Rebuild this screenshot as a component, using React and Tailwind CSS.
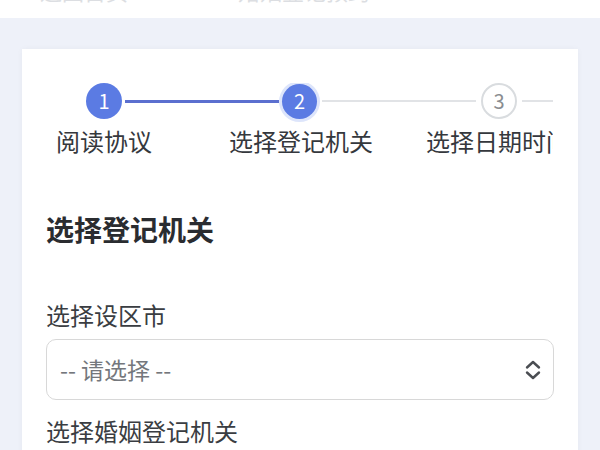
import React from "react";

const font = { fontFamily: '"Noto Sans CJK SC", "Noto Sans", sans-serif' };

function Circle({ n, state }) {
  if (state === "done") {
    return (
      <div className="w-[36px] h-[36px] rounded-full bg-[#5b7be3] text-white flex items-center justify-center text-[20px] shrink-0">
        {n}
      </div>
    );
  }
  if (state === "active") {
    return (
      <div className="w-[35px] h-[35px] rounded-full bg-[#5b7be3] text-white flex items-center justify-center text-[20px] shrink-0 ring-[3px] ring-[#dde5fb]">
        {n}
      </div>
    );
  }
  return (
    <div className="w-[36px] h-[36px] rounded-full bg-white border-2 border-[#d9dcdf] text-[#8a8d91] flex items-center justify-center text-[20px] shrink-0">
      {n}
    </div>
  );
}

export default function App() {
  return (
    <div className="w-[600px] h-[450px] overflow-hidden bg-[#eef1f9]" style={font}>
      <div className="h-[18px] bg-white overflow-hidden">
        <div className="-mt-[22px] flex gap-[110px] pl-[40px] text-[22px] leading-[24px] text-[#dcdee2]">
          <span>返回首页</span>
          <span>婚姻登记预约</span>
        </div>
      </div>
      <div className="mx-[22px] mt-[31px] bg-white shadow-[0_0_6px_rgba(0,0,0,0.04)] px-[24px] pt-[82px] pb-[40px] h-[420px]">
        <div className="-mt-[48px] w-[507px] overflow-hidden">
          <div className="flex items-center pl-[40px] w-[560px]">
            <Circle n="1" state="done" />
            <div className="h-[3px] w-[154px] mx-[3px] bg-[#5b6fcf]" />
            <Circle n="2" state="active" />
            <div className="h-[2px] w-[154px] mx-[5px] bg-[#e1e3e6]" />
            <Circle n="3" state="todo" />
            <div className="h-[2px] w-[40px] ml-[5px] bg-[#e1e3e6]" />
          </div>
          <div className="flex gap-[81px] mt-[6px] w-[600px] text-[24px] leading-[32px] text-[#35383d]">
            <div className="w-[116px] flex justify-center whitespace-nowrap">阅读协议</div>
            <div className="w-[116px] flex justify-center whitespace-nowrap">选择登记机关</div>
            <div className="w-[116px] flex justify-center whitespace-nowrap">选择日期时间</div>
          </div>
        </div>
        <h2 className="mt-[54px] text-[28px] leading-[36px] font-bold text-[#2a2c30]">选择登记机关</h2>
        <div className="mt-[52px] text-[24px] leading-[32px] text-[#3a3d42]">选择设区市</div>
        <div className="mt-[8px] h-[61px] rounded-[10px] border border-[#d8d8d8] flex items-center justify-between pl-[13px] pr-[10px]">
          <span className="text-[23px] text-[#74777c]">-- 请选择 --</span>
          <svg width="20" height="22" viewBox="0 0 20 22" fill="none" stroke="#4a4d52" strokeWidth="2.4" strokeLinecap="round" strokeLinejoin="round">
            <path d="M4 8.5 L10 3 L16 8.5" />
            <path d="M4 13.5 L10 19 L16 13.5" />
          </svg>
        </div>
        <div className="mt-[15px] text-[24px] leading-[32px] text-[#3a3d42]">选择婚姻登记机关</div>
      </div>
    </div>
  );
}
